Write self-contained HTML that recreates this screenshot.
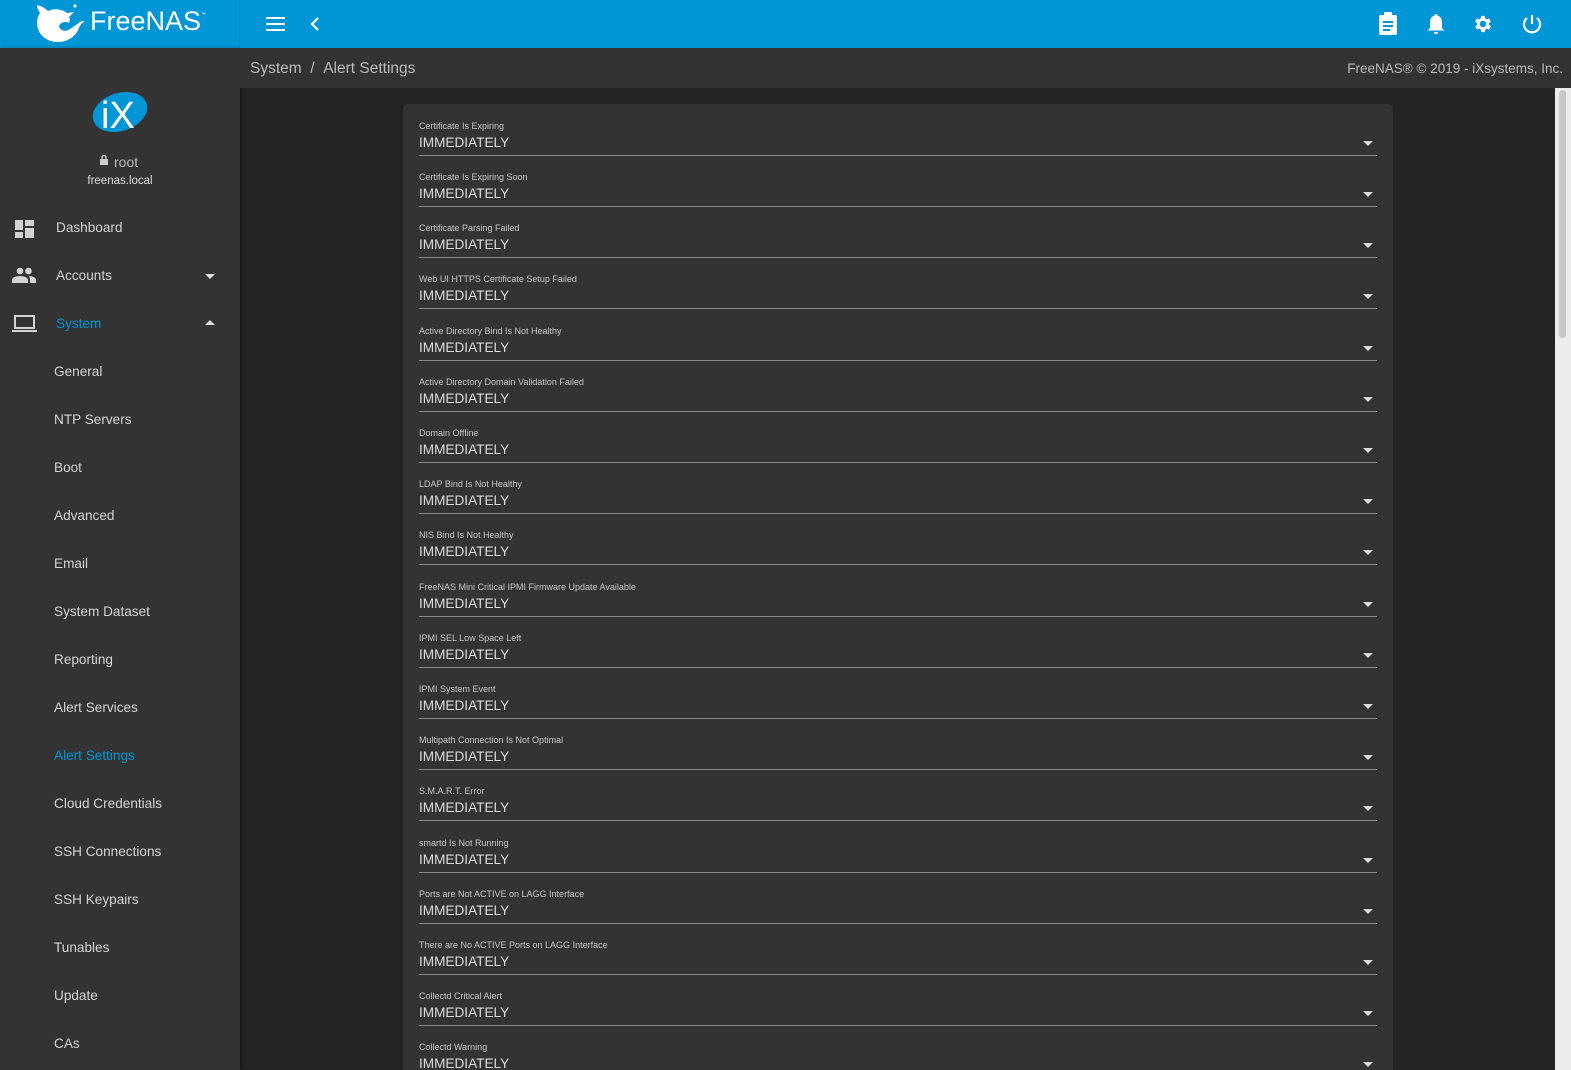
<!DOCTYPE html>
<html style="overflow:hidden;width:1571px;height:1070px"><head><meta charset="utf-8"><style>
*{margin:0;padding:0;box-sizing:border-box}
body{width:1571px;height:1070px;overflow:hidden;background:#242424;font-family:"Liberation Sans",sans-serif;position:relative}
.top{position:absolute;left:0;top:0;width:1571px;height:48px;background:#0095d5}
.top .div{position:absolute;left:239px;top:0;width:1px;height:48px;background:#0a86bd}
.side{position:absolute;left:0;top:48px;width:240px;height:1022px;background:#333;box-shadow:2px 0 3px rgba(0,0,0,.3)}
.crumb{position:absolute;left:240px;top:48px;width:1331px;height:40px;background:#323232}
.nav{position:absolute;font-size:13.6px;color:#d4d4d4}
.card{position:absolute;left:403px;top:104px;width:990px;height:966px;background:#333;border-radius:6px 6px 0 0}
.row{position:absolute;left:16px;width:958px;height:51px}
.row .l{position:absolute;top:1px;font-size:9px;color:#c9c9c9}
.row .v{position:absolute;top:15px;font-size:13.6px;color:#dcdcdc}
.row .u{position:absolute;top:35px;left:0;width:958px;height:1px;background:#8a8a8a}
.row .a{position:absolute;top:21px;right:4px;width:0;height:0;border-left:5px solid transparent;border-right:5px solid transparent;border-top:5px solid #ddd}
.sb{position:absolute;left:1555px;top:88px;width:16px;height:982px;background:#ececec}
.sb i{position:absolute;left:4px;top:2px;width:7px;height:248px;background:#c8c8c8;border-radius:4px}
</style></head><body>
<div class="top"><div class="div"></div>
<svg style="position:absolute;left:34px;top:3px" width="54" height="40" viewBox="0 0 54 40"><path fill="#fff" d="M3 2 C8 3 12 6 14 8 C20 5 28 6 33 10 L40 9 L35 14 C36 16 36 18 35 20 C32 18 27 19 25 23 C26 27 30 29 34 27 C38 25 42 22 46 19 C48 18 50 18 51 18 C48 20 46 22 45 25 C42 33 34 39 24 39 C12 39 3 31 3 20 C3 16 4 13 6 10 C4 7 3 5 3 2 Z"/><circle cx="41" cy="3" r="1.5" fill="#fff"/></svg>
<div style="position:absolute;left:90px;top:6px;font-size:27px;color:#fff">FreeNAS<sup style="font-size:5px;vertical-align:top;position:relative;top:6px">™</sup></div>
<div style="position:absolute;left:266px;top:17px;width:19px;height:2px;background:#fff;box-shadow:0 6px 0 #fff,0 12px 0 #fff"></div>
<svg style="position:absolute;left:308px;top:16px" width="14" height="16" viewBox="0 0 14 16"><path d="M10 2 L4 8 L10 14" stroke="#fff" stroke-width="2.2" fill="none"/></svg>
<svg style="position:absolute;left:1377px;top:12px" width="22" height="24" viewBox="0 0 22 24"><rect x="2" y="3" width="18" height="20" rx="2" fill="#fff"/><rect x="7" y="0" width="8" height="5" rx="1" fill="#fff"/><rect x="6" y="9" width="10" height="2" fill="#0095d5"/><rect x="6" y="13" width="10" height="2" fill="#0095d5"/><rect x="6" y="17" width="7" height="2" fill="#0095d5"/></svg>
<svg style="position:absolute;left:1426px;top:13px" width="20" height="22" viewBox="0 0 20 22"><path fill="#fff" d="M10 1 C11 1 11.5 1.8 11.5 2.5 C15 3.5 16 6.5 16 10 L16 15 L18.5 17.5 L1.5 17.5 L4 15 L4 10 C4 6.5 5 3.5 8.5 2.5 C8.5 1.8 9 1 10 1 Z M7.8 19 L12.2 19 C12.2 20.3 11.2 21.2 10 21.2 C8.8 21.2 7.8 20.3 7.8 19 Z"/></svg>
<svg style="position:absolute;left:1472px;top:13px" width="22" height="22" viewBox="0 0 24 24"><path fill="#fff" d="M19.4 13a7.5 7.5 0 000-2l2.1-1.6-2-3.5-2.5 1a7.6 7.6 0 00-1.7-1L15 3.2h-4l-.4 2.7a7.6 7.6 0 00-1.7 1l-2.5-1-2 3.5L6.6 11a7.5 7.5 0 000 2l-2.1 1.6 2 3.5 2.5-1c.5.4 1.1.8 1.7 1l.4 2.7h4l.4-2.7c.6-.2 1.2-.6 1.7-1l2.5 1 2-3.5zM13 15.5A3.5 3.5 0 1113 8.5a3.5 3.5 0 010 7z" transform="translate(-1 0)"/></svg>
<svg style="position:absolute;left:1520px;top:12px" width="24" height="24" viewBox="0 0 24 24"><path d="M12 3v9" stroke="#fff" stroke-width="2.2" fill="none"/><path d="M7 6a8 8 0 1010 0" stroke="#fff" stroke-width="2.2" fill="none"/></svg>
</div>
<div class="side">
<svg style="position:absolute;left:91px;top:42px" width="58" height="44" viewBox="0 0 58 44"><ellipse cx="29" cy="22" rx="28" ry="19" transform="rotate(-18 29 22)" fill="#0095d5"/><text x="10" y="38" font-family="Liberation Sans" font-size="38" fill="#fff">iX</text></svg>
<svg style="position:absolute;left:99px;top:106px" width="10" height="12" viewBox="0 0 10 12"><rect x="1" y="5" width="8" height="6" fill="#ccc"/><path d="M3 5V3.5a2 2 0 014 0V5" stroke="#ccc" stroke-width="1.4" fill="none"/></svg>
<div style="position:absolute;left:114px;top:106px;font-size:14px;color:#bbb">root</div>
<div style="position:absolute;left:0;width:240px;top:127px;text-align:center;font-size:11.5px;color:#ddd">freenas.local</div>
<svg style="position:absolute;left:15px;top:172px" width="19" height="18" viewBox="0 0 19 18"><g fill="#d4d4d4"><rect x="0" y="0" width="8" height="10"/><rect x="10" y="0" width="9" height="6"/><rect x="0" y="12" width="8" height="6"/><rect x="10" y="8" width="9" height="10"/></g></svg>
<div class="nav" style="left:56px;top:172px">Dashboard</div>
<svg style="position:absolute;left:12px;top:219px" width="24" height="16" viewBox="0 0 24 16"><g fill="#d4d4d4"><circle cx="8" cy="4" r="3.3"/><circle cx="16.5" cy="4" r="3.3"/><path d="M0 16v-3c0-2.5 4-4 8-4s8 1.5 8 4v3z"/><path d="M17 9c3.5 0 7 1.5 7 4v3h-6v-3c0-1.5-.5-2.8-1-4z"/></g></svg>
<div class="nav" style="left:56px;top:220px">Accounts</div>
<div style="position:absolute;left:205px;top:226px;border-left:5px solid transparent;border-right:5px solid transparent;border-top:5px solid #ddd"></div>
<svg style="position:absolute;left:12px;top:267px" width="25" height="18" viewBox="0 0 25 18"><rect x="3" y="1" width="19" height="12" fill="none" stroke="#d4d4d4" stroke-width="2"/><rect x="0" y="15" width="25" height="2" fill="#d4d4d4"/></svg>
<div class="nav" style="left:56px;top:268px;color:#0095d5">System</div>
<div style="position:absolute;left:205px;top:272px;border-left:5px solid transparent;border-right:5px solid transparent;border-bottom:5px solid #ddd"></div>
<div class="nav" style="left:54px;top:316px">General</div>
<div class="nav" style="left:54px;top:364px">NTP Servers</div>
<div class="nav" style="left:54px;top:412px">Boot</div>
<div class="nav" style="left:54px;top:460px">Advanced</div>
<div class="nav" style="left:54px;top:508px">Email</div>
<div class="nav" style="left:54px;top:556px">System Dataset</div>
<div class="nav" style="left:54px;top:604px">Reporting</div>
<div class="nav" style="left:54px;top:652px">Alert Services</div>
<div class="nav" style="left:54px;top:700px;color:#0095d5">Alert Settings</div>
<div class="nav" style="left:54px;top:748px">Cloud Credentials</div>
<div class="nav" style="left:54px;top:796px">SSH Connections</div>
<div class="nav" style="left:54px;top:844px">SSH Keypairs</div>
<div class="nav" style="left:54px;top:892px">Tunables</div>
<div class="nav" style="left:54px;top:940px">Update</div>
<div class="nav" style="left:54px;top:988px">CAs</div>
</div>
<div class="crumb">
<div style="position:absolute;left:10px;top:12px;font-size:15.5px;color:#bbb">System &nbsp;/ &nbsp;Alert Settings</div>
<div style="position:absolute;right:8px;top:13px;font-size:13.5px;color:#bbb">FreeNAS® © 2019 - iXsystems, Inc.</div>
</div>
<div class="card">
<div class="row" style="top:16px"><div class="l">Certificate Is Expiring</div><div class="v">IMMEDIATELY</div><div class="u"></div><div class="a"></div></div>
<div class="row" style="top:67px"><div class="l">Certificate Is Expiring Soon</div><div class="v">IMMEDIATELY</div><div class="u"></div><div class="a"></div></div>
<div class="row" style="top:118px"><div class="l">Certificate Parsing Failed</div><div class="v">IMMEDIATELY</div><div class="u"></div><div class="a"></div></div>
<div class="row" style="top:169px"><div class="l">Web UI HTTPS Certificate Setup Failed</div><div class="v">IMMEDIATELY</div><div class="u"></div><div class="a"></div></div>
<div class="row" style="top:221px"><div class="l">Active Directory Bind Is Not Healthy</div><div class="v">IMMEDIATELY</div><div class="u"></div><div class="a"></div></div>
<div class="row" style="top:272px"><div class="l">Active Directory Domain Validation Failed</div><div class="v">IMMEDIATELY</div><div class="u"></div><div class="a"></div></div>
<div class="row" style="top:323px"><div class="l">Domain Offline</div><div class="v">IMMEDIATELY</div><div class="u"></div><div class="a"></div></div>
<div class="row" style="top:374px"><div class="l">LDAP Bind Is Not Healthy</div><div class="v">IMMEDIATELY</div><div class="u"></div><div class="a"></div></div>
<div class="row" style="top:425px"><div class="l">NIS Bind Is Not Healthy</div><div class="v">IMMEDIATELY</div><div class="u"></div><div class="a"></div></div>
<div class="row" style="top:477px"><div class="l">FreeNAS Mini Critical IPMI Firmware Update Available</div><div class="v">IMMEDIATELY</div><div class="u"></div><div class="a"></div></div>
<div class="row" style="top:528px"><div class="l">IPMI SEL Low Space Left</div><div class="v">IMMEDIATELY</div><div class="u"></div><div class="a"></div></div>
<div class="row" style="top:579px"><div class="l">IPMI System Event</div><div class="v">IMMEDIATELY</div><div class="u"></div><div class="a"></div></div>
<div class="row" style="top:630px"><div class="l">Multipath Connection Is Not Optimal</div><div class="v">IMMEDIATELY</div><div class="u"></div><div class="a"></div></div>
<div class="row" style="top:681px"><div class="l">S.M.A.R.T. Error</div><div class="v">IMMEDIATELY</div><div class="u"></div><div class="a"></div></div>
<div class="row" style="top:733px"><div class="l">smartd Is Not Running</div><div class="v">IMMEDIATELY</div><div class="u"></div><div class="a"></div></div>
<div class="row" style="top:784px"><div class="l">Ports are Not ACTIVE on LAGG Interface</div><div class="v">IMMEDIATELY</div><div class="u"></div><div class="a"></div></div>
<div class="row" style="top:835px"><div class="l">There are No ACTIVE Ports on LAGG Interface</div><div class="v">IMMEDIATELY</div><div class="u"></div><div class="a"></div></div>
<div class="row" style="top:886px"><div class="l">Collectd Critical Alert</div><div class="v">IMMEDIATELY</div><div class="u"></div><div class="a"></div></div>
<div class="row" style="top:937px"><div class="l">Collectd Warning</div><div class="v">IMMEDIATELY</div><div class="a"></div></div>
</div>
<div class="sb"><i></i></div>
</body></html>
